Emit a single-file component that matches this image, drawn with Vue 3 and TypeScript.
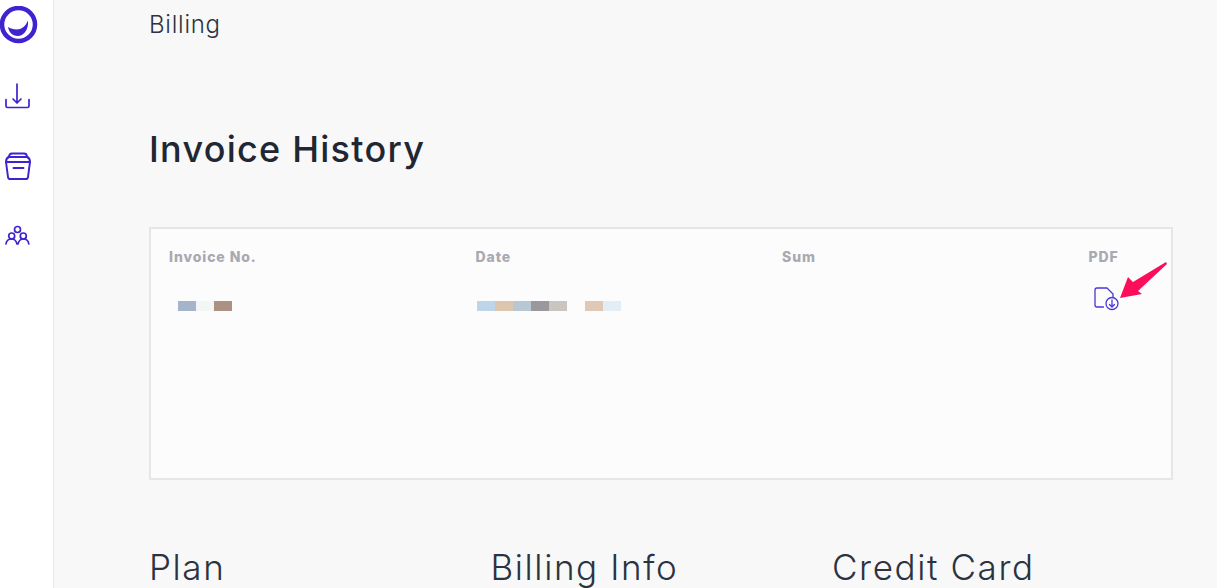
<template>
  <div class="page">
    <aside class="sidebar">
      <svg class="logo" width="38" height="38" viewBox="0 0 38 38" fill="none">
        <circle cx="18.5" cy="18.5" r="16.5" stroke="#3f22d0" stroke-width="4.5" />
        <path d="M8 21c2.500 1.500 5.500 2.500 8.500 2.500 5 0 9-3 11.500-9 .8 8-3.500 15.500-10.500 15.500-5 0-8.500-3.500-9.500-9z" fill="#3f22d0" />
      </svg>
      <svg class="nav-icon" width="28" height="28" viewBox="0 0 28 28" fill="none" stroke="#3f22d0" stroke-width="1.700" stroke-linecap="round" stroke-linejoin="round">
        <path d="M14 2v19M10 17l4 4 4-4" />
        <path d="M3 17.500V24c0 1 .5 1.500 1.500 1.500h20c1 0 1.500-.5 1.500-1.500v-6.500" />
      </svg>
      <svg class="nav-icon" width="28" height="28" viewBox="0 0 28 28" fill="none" stroke="#3f22d0" stroke-width="1.900" stroke-linecap="round" stroke-linejoin="round">
        <path d="M5 5c0-2.500 1-3.500 3-3.500h12c2 0 3 1 3 3.500" />
        <path d="M4.500 5h19" />
        <path d="M2 10c0-3 1.500-4.500 3-5h18c1.500.5 3 2 3 5l-2 15c-.2 1.300-.8 2-2 2H6c-1.200 0-1.800-.7-2-2L2 10z" />
        <path d="M2 10h24M9.500 16h10" />
      </svg>
      <svg class="nav-icon" width="28" height="28" viewBox="0 0 28 28" fill="none" stroke="#3f22d0" stroke-width="1.700" stroke-linecap="round" stroke-linejoin="round">
        <circle cx="13.500" cy="7.500" r="3" />
        <circle cx="7.700" cy="14" r="3" />
        <circle cx="19.300" cy="14" r="3" />
        <path d="M2 22c.3-3 2.500-5 5.700-5 2.500 0 4.500 1.500 5.300 5M24.800 22c-.3-3-2.500-5-5.500-5-2.500 0-4.500 1.500-5.300 5" />
      </svg>
    </aside>

    <main class="content">
      <div class="crumb">Billing</div>
      <h1 class="title">Invoice History</h1>

      <section class="card">
        <div class="table-head">
          <span v-for="col in columns" :key="col">{{ col }}</span>
        </div>
        <div class="table-row">
          <div class="cell">
            <div class="redacted inset">
              <i v-for="(c, i) in invoiceBlocks" :key="i" :style="{ background: c }"></i>
            </div>
          </div>
          <div class="cell">
            <div class="redacted thin">
              <i v-for="(c, i) in dateBlocks" :key="i" :style="{ background: c }"></i>
            </div>
          </div>
          <div class="cell"></div>
          <div class="cell">
            <svg class="pdf" width="26" height="26" viewBox="0 0 26 26" fill="none" stroke="#4a35d8" stroke-width="1.300" stroke-linecap="round" stroke-linejoin="round">
              <path d="M10.500 21H4c-1.200 0-2-.8-2-2V4c0-1.200.8-2 2-2h10l6 6v3" />
              <circle cx="19" cy="17.500" r="6" />
              <path d="M19 14v7M16.500 18.500l2.500 2.500 2.500-2.500" />
            </svg>
          </div>
        </div>
        <svg class="arrow" width="56" height="44" viewBox="0 0 56 44">
          <path d="M51 3 18 23l-5-5-8 21 22-4-4-3 29-27z" fill="#fb0f5b" />
        </svg>
      </section>

      <div class="sections">
        <h2>Plan</h2>
        <h2>Billing Info</h2>
        <h2>Credit Card</h2>
      </div>
    </main>
  </div>
</template>

<script setup lang="ts">
const columns = ['Invoice No.', 'Date', 'Sum', 'PDF'];
const invoiceBlocks = ['#a5b4ca', '#f2f6f5', '#ac9183'];
const dateBlocks = ['#bdd4e9', '#dcc6af', '#b7c7d4', '#9a989c', '#cbc5bf', 'transparent', '#dfc9b6', '#e3edf6'];
</script>

<style>
html,
body {
  margin: 0;
  background: #f8f8f8;
}
</style>

<style scoped>
.page {
  display: flex;
  height: 588px;
  overflow: hidden;
  font-family: Inter, 'Liberation Sans', sans-serif;
  color: #1f2733;
}

.sidebar {
  flex: 0 0 53px;
  display: flex;
  flex-direction: column;
  align-items: flex-start;
  background: #fff;
  border-right: 1px solid #e8e8e8;
}

.logo {
  margin-top: 6px;
}

.nav-icon {
  margin: 42px 0 0 4px;
}

.logo + .nav-icon {
  margin: 38px 0 0 3px;
}

.content {
  flex: 1;
  padding: 10px 45px 0 96px;
  min-width: 0;
}

.crumb {
  margin-left: -1px;
  font-size: 24px;
  font-weight: 300;
  line-height: 30px;
  letter-spacing: 0.75px;
  color: #2b3340;
}

.title {
  margin: 87px 0 0 -1px;
  font-size: 36px;
  font-weight: 500;
  line-height: 44px;
  letter-spacing: 1.25px;
}

.card {
  position: relative;
  box-sizing: border-box;
  height: 253px;
  margin: 56px -1px 0;
  padding: 19px 18px;
  background: #fcfcfc;
  border: 2px solid #e6e6ea;
}

.table-head,
.table-row {
  display: grid;
  grid-template-columns: repeat(4, 306.5px);
}

.table-head {
  font-size: 14px;
  font-weight: 800;
  line-height: 18px;
  letter-spacing: 0.9px;
  color: #a9a9b1;
}

.table-row {
  margin-top: 24px;
  height: 30px;
  align-items: start;
}

.redacted {
  display: flex;
  height: 10px;
  margin-top: 11px;
}

.redacted i {
  display: block;
  width: 18px;
}

.redacted.inset {
  margin-left: 9px;
}

.redacted.thin {
  margin-left: 1px;
}

.pdf {
  display: block;
  margin: -4px 0 0 4px;
}

.arrow {
  position: absolute;
  left: 964px;
  top: 30px;
}

.sections {
  display: grid;
  grid-template-columns: repeat(3, 341.5px);
  margin: 64px 0 0 -1px;
}

.sections h2 {
  margin: 0;
  font-size: 35px;
  font-weight: 300;
  line-height: 46px;
  letter-spacing: 1.600px;
  color: #2b3340;
}
</style>
